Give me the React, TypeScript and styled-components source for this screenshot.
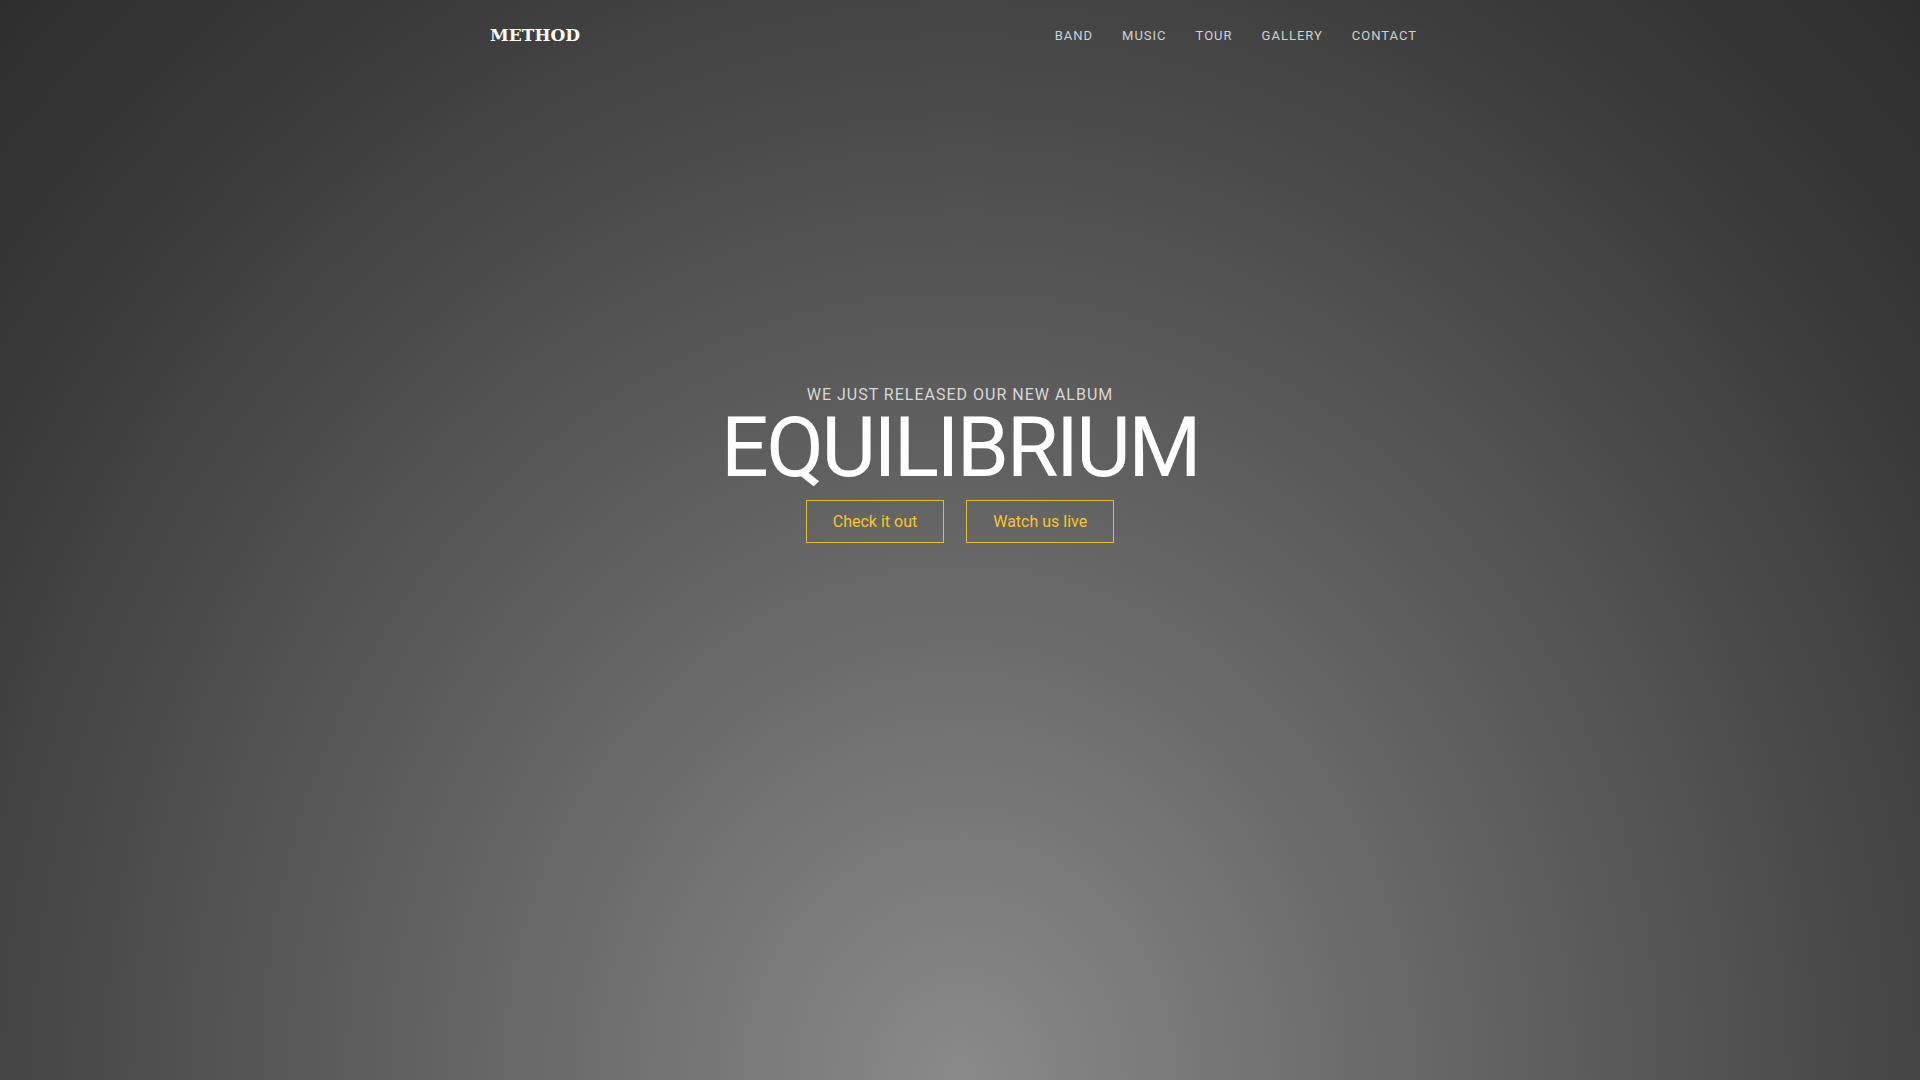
import React from "react";
import styled, { createGlobalStyle } from "styled-components";

const GlobalStyle = createGlobalStyle`
  html, body { margin: 0; padding: 0; height: 100%; }
  body { font-family: Roboto, "Liberation Sans", sans-serif; }
  #root { min-height: 100vh; }
`;

const Page = styled.div`
  min-height: 100vh;
  box-sizing: border-box;
  background: radial-gradient(
    ellipse farthest-corner at 50% 100%,
    #8a8a8a 0%,
    #6a6a6a 31%,
    #444444 71%,
    #3b3b3b 80%,
    #2e2e2e 100%
  );
  display: flex;
  flex-direction: column;
`;

const Header = styled.header`
  width: 940px;
  margin: 0 auto;
  height: 70px;
  display: flex;
  align-items: center;
  justify-content: space-between;
`;

const Logo = styled.a`
  font-family: "DejaVu Serif", "Liberation Serif", serif;
  font-weight: bold;
  font-size: 17px;
  color: #ffffff;
  text-decoration: none;
`;

const Nav = styled.nav`
  display: flex;
`;

const NavLink = styled.a`
  padding: 0 14.5px;
  font-family: Roboto, "Liberation Sans", sans-serif;
  font-size: 13px;
  font-weight: 400;
  letter-spacing: 1px;
  color: #d2d2d2;
  text-decoration: none;
  &:last-child { padding-right: 13px; }
`;

const Hero = styled.section`
  display: flex;
  flex-direction: column;
  align-items: center;
  padding-top: 314px;
`;

const Kicker = styled.p`
  margin: 0;
  font-size: 16px;
  letter-spacing: 1px;
  color: #d8d8d8;
  line-height: 22px;
`;

const Title = styled.h1`
  margin: 0;
  font-size: 84px;
  font-weight: 400;
  letter-spacing: -2.5px;
  line-height: 84px;
  color: #ffffff;
`;

const Actions = styled.div`
  display: flex;
  gap: 22px;
  margin-top: 10px;
`;

const Button = styled.a`
  display: inline-block;
  box-sizing: border-box;
  height: 43px;
  line-height: 41px;
  padding: 0 26px;
  border: 1px solid #e3bd2c;
  color: #f7c62b;
  font-size: 16px;
  font-weight: 400;
  text-decoration: none;
`;

export default function App() {
  return (
    <>
      <GlobalStyle />
      <Page>
        <Header>
          <Logo href="#">METHOD</Logo>
          <Nav>
            <NavLink href="#">BAND</NavLink>
            <NavLink href="#">MUSIC</NavLink>
            <NavLink href="#">TOUR</NavLink>
            <NavLink href="#">GALLERY</NavLink>
            <NavLink href="#">CONTACT</NavLink>
          </Nav>
        </Header>
        <Hero>
          <Kicker>WE JUST RELEASED OUR NEW ALBUM</Kicker>
          <Title>EQUILIBRIUM</Title>
          <Actions>
            <Button href="#">Check it out</Button>
            <Button href="#">Watch us live</Button>
          </Actions>
        </Hero>
      </Page>
    </>
  );
}
